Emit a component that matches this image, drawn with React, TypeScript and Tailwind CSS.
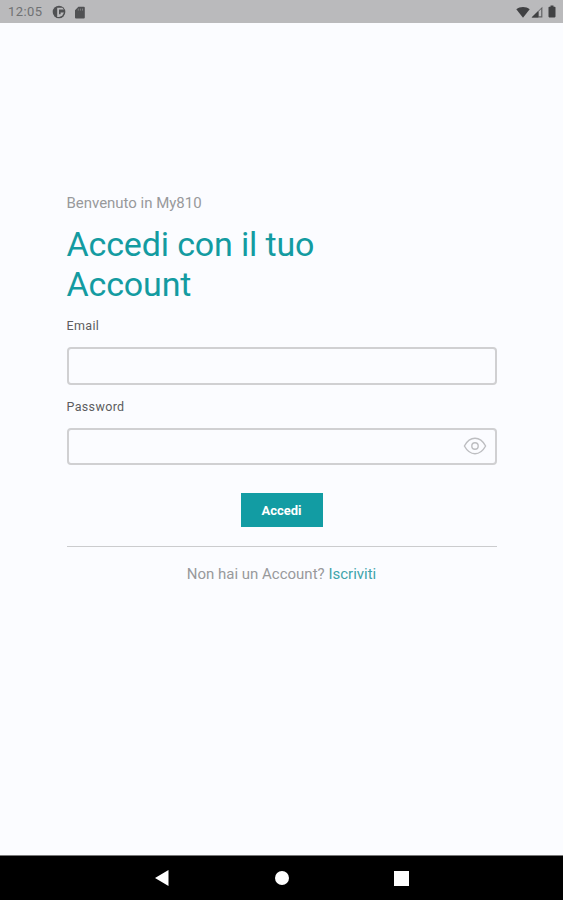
import React from "react";

function StatusBar() {
  return (
    <header className="flex h-[23px] shrink-0 items-center bg-[#bababc] pl-2 pr-[7px] text-[#505153]">
      <span className="w-[44px] pt-px text-[13px] leading-4 tracking-[0.45px] text-[#707173]">12:05</span>
      <svg className="mt-px h-[14px] w-[14px]" viewBox="0 0 14 14">
        <circle cx="7" cy="7" r="6.3" fill="currentColor" />
        <path d="M5.2 2.8h5.2l1.4 1.8v3.2l-1.6 3-3 1.2H5.2z" fill="#bababc" />
        <path d="M7 4.4h5.2v3.2H8.6v1.6H7z" fill="currentColor" />
      </svg>
      <svg className="ml-2 mt-px h-[13px] w-[12px]" viewBox="0 0 12 13">
        <path d="M4.4.8h5.4a1 1 0 0 1 1 1v9.6a1 1 0 0 1-1 1H2a1 1 0 0 1-1-1V4.2z" fill="currentColor" />
        <path d="M4.3 2.6v2M6.4 2.6v2M8.5 2.6v2" stroke="#8a8b8d" strokeWidth=".8" />
      </svg>
      <svg className="ml-auto h-[12px] w-[14px]" viewBox="0 0 14 12">
        <path d="M.3 3.3C4 .2 10 .2 13.7 3.3L7 11.7z" fill="#404143" />
      </svg>
      <svg className="ml-px mr-[5px] h-[12px] w-[12px]" viewBox="0 0 12 12">
        <path d="M.6 11.5L11.4.8v10.7z" fill="#606163" />
        <path d="M.6 11.5L7.3 4.9v6.6z" fill="#404143" />
        <path d="M7.8 5.4v4.8h2.4V3z" fill="#bababc" />
      </svg>
      <svg className="h-[13px] w-[8px]" viewBox="0 0 8 13">
        <path d="M2.5.5h3v1.3h1.2c.5 0 .8.3.8.8v9c0 .5-.3.8-.8.8H1.3c-.5 0-.8-.3-.8-.8v-9c0-.5.3-.8.8-.8h1.2z" fill="#404143" />
      </svg>
    </header>
  );
}

function EyeIcon() {
  return (
    <svg className="block h-[18px] w-[24px]" viewBox="0 0 24 18" fill="none" stroke="#bdbec1" strokeWidth="1.4">
      <path d="M1.4 9C4 4.2 7.3 1.3 12 1.3S20 4.2 22.6 9C20 13.8 16.7 16.7 12 16.7S4 13.8 1.4 9z" />
      <circle cx="12" cy="9" r="3.2" />
    </svg>
  );
}

function Field({ id, label, type }: { id: string; label: string; type: string }) {
  return (
    <div>
      <label htmlFor={id} className="block h-[21px] text-[12.5px] leading-4 tracking-[0.35px] text-[#5b5c5e]">{label}</label>
      <div className="mt-[8px] flex h-[37.5px] items-center rounded-[4px] border-2 border-[#d0d0d2] pr-[8px]">
        <input id={id} type={type} className="min-w-0 flex-1 bg-transparent px-2 outline-none" />
        {type === "password" && <button type="button" aria-label="Mostra password"><EyeIcon /></button>}
      </div>
    </div>
  );
}

function NavBar() {
  return (
    <nav className="flex h-[45px] shrink-0 items-center justify-center gap-[105px] border-t border-[#777] bg-black">
      <svg className="h-4 w-4" viewBox="0 0 16 16"><path d="M1 8L14.5 0v16z" fill="white" /></svg>
      <span className="h-[14px] w-[14px] rounded-full bg-white" />
      <span className="h-[15px] w-[15px] bg-white" />
    </nav>
  );
}

export default function App() {
  return (
    <div className="flex h-screen w-full flex-col overflow-hidden bg-[#fbfcff] font-['Roboto',sans-serif]">
      <StatusBar />
      <main className="flex flex-1 flex-col px-[66.5px] pt-[170px]">
        <p className="text-[15px] leading-5 tracking-[-0.02px] text-[#98999b]">Benvenuto in My810</p>
        <h1 className="mt-3 w-[270px] text-[34px] leading-[39.5px] tracking-[-0.15px] text-[#139ba1]">Accedi con il tuo Account</h1>
        <form className="mt-[14px] flex flex-col gap-[14px]">
          <Field id="email" label="Email" type="email" />
          <Field id="password" label="Password" type="password" />
          <button type="button" className="mt-[14px] h-[34px] w-[82px] self-center bg-[#129ca3] pt-px text-[13px] font-bold text-white">Accedi</button>
        </form>
        <hr className="mt-[19px] border-[#cbccce]" />
        <p className="mt-[17px] text-center text-[15px] leading-5 text-[#98999b]">
          Non hai un Account? <a className="text-[#40a4ab]">Iscriviti</a>
        </p>
      </main>
      <NavBar />
    </div>
  );
}
